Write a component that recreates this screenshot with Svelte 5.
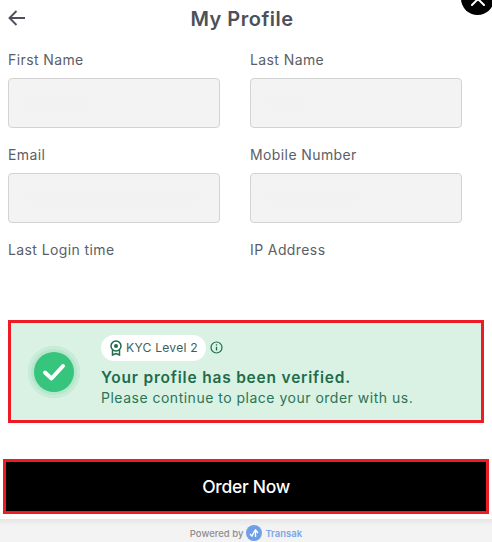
<script>
  const fields = [
    { label: "First Name", smudge: 85 },
    { label: "Last Name", smudge: 55 },
    { label: "Email", smudge: 195 },
    { label: "Mobile Number", smudge: 110 }
  ];
</script>

<div class="page">
  <button class="close" aria-label="Close">
    <svg width="14" height="14" viewBox="0 0 14 14"><path d="M1 1l12 12M13 1L1 13" stroke="#fff" stroke-width="2" stroke-linecap="round" /></svg>
  </button>

  <header>
    <svg class="back" width="18" height="16" viewBox="0 0 18 16" fill="none"><path d="M17 8H1.500M8.500 1L1.500 8l7 7" stroke="#4d5058" stroke-width="1.900" /></svg>
    <h1>My Profile</h1>
  </header>

  <div class="fields">
    {#each fields as field}
      <div class="field">
        <span class="label">{field.label}</span>
        <div class="input"><span class="smudge" style="width: {field.smudge}px"></span></div>
      </div>
    {/each}
    <div class="field"><span class="label">Last Login time</span></div>
    <div class="field"><span class="label">IP Address</span></div>
  </div>

  <section class="kyc">
    <div class="halo">
      <div class="tick">
        <svg width="26" height="22" viewBox="0 0 26 22" fill="none"><path d="M4 11.500l6.500 6L22 5" stroke="#fff" stroke-width="4" stroke-linecap="round" stroke-linejoin="round" /></svg>
      </div>
    </div>
    <div class="kyc-text">
      <div class="badge-row">
        <span class="badge">
          <svg width="14" height="16" viewBox="0 0 14 16" fill="none" stroke="#1f6b4a"><circle cx="7" cy="6" r="5" stroke-width="1.500" /><circle cx="7" cy="6" r="2" fill="#1f6b4a" stroke="none" /><path d="M3.500 10v5l3.500-1.500L10.500 15v-5" stroke-width="1.500" /></svg>
          KYC Level 2
        </span>
        <svg width="13" height="13" viewBox="0 0 13 13" fill="none" stroke="#1f6b4a"><circle cx="6.500" cy="6.500" r="5.500" stroke-width="1.200" /><path d="M6.500 5.800v3.700M6.500 3.300v1.300" stroke-width="1.300" /></svg>
      </div>
      <p class="verified">Your profile has been verified.</p>
      <p class="continue">Please continue to place your order with us.</p>
    </div>
  </section>

  <button class="order">Order Now</button>

  <footer>
    <span>Powered by</span>
    <span class="logo">
      <svg width="10" height="9" viewBox="0 0 10 9" fill="none" stroke="#fff" stroke-width="1.400"><path d="M1 5l2 2 2-4M5 3l1.500-2L9 4M6.500 2v6" /></svg>
    </span>
    <span class="brand">Transak</span>
  </footer>
</div>

<style>
  :global(body) {
    margin: 0;
    background: #fff;
  }
  .page {
    position: relative;
    width: 492px;
    height: 542px;
    overflow: hidden;
    font-family: Inter, "Liberation Sans", sans-serif;
    color: #51545c;
  }
  .close {
    position: absolute;
    top: -18px;
    right: -2px;
    width: 33px;
    height: 33px;
    padding: 0;
    border: 0;
    border-radius: 50%;
    background: #000;
    display: flex;
    align-items: flex-end;
    justify-content: center;
  }
  .close svg {
    margin-bottom: 9px;
  }
  header {
    height: 37px;
    display: flex;
    align-items: center;
    justify-content: center;
    padding-right: 8px;
    position: relative;
  }
  .back {
    position: absolute;
    left: 8px;
    top: 10px;
  }
  h1 {
    margin: 0;
    font-size: 20px;
    font-weight: 600;
    letter-spacing: 0.5px;
    color: #4d5058;
  }
  .fields {
    display: grid;
    grid-template-columns: 212px 212px;
    column-gap: 30px;
    row-gap: 17px;
    padding: 13px 8px 0;
  }
  .field {
    display: flex;
    flex-direction: column;
    gap: 9px;
  }
  .label {
    font-size: 14px;
    line-height: 19px;
    letter-spacing: 0.4px;
    color: #5b5e66;
  }
  .input {
    box-sizing: border-box;
    height: 50px;
    border: 1px solid #d3d3d3;
    border-radius: 4px;
    background: #f3f3f3;
    display: flex;
    align-items: center;
    padding-left: 6px;
  }
  .smudge {
    height: 18px;
    border-radius: 8px;
    background: #f2f2f2;
    filter: blur(3px);
  }
  .kyc {
    box-sizing: border-box;
    width: 476px;
    height: 103px;
    margin: 61px 0 0 8px;
    border: 3px solid #ed1c24;
    background: #d9f2e4;
    display: flex;
    align-items: center;
    gap: 21px;
    padding-left: 17px;
  }
  .halo {
    width: 52px;
    height: 52px;
    flex: none;
    border-radius: 50%;
    background: #b6e6cb;
    box-shadow: inset 0 0 0 3px #c9ecd9;
    display: flex;
    align-items: center;
    justify-content: center;
  }
  .tick {
    width: 40px;
    height: 40px;
    border-radius: 50%;
    background: #37c47c;
    display: flex;
    align-items: center;
    justify-content: center;
  }
  .kyc-text {
    display: flex;
    flex-direction: column;
    margin-top: -1px;
    color: #1f6b4a;
  }
  .badge-row {
    display: flex;
    align-items: center;
    gap: 4px;
    margin-bottom: 6px;
  }
  .badge {
    height: 26px;
    box-sizing: border-box;
    padding: 0 8px;
    border-radius: 13px;
    background: #fff;
    display: flex;
    align-items: center;
    gap: 3px;
    font-size: 12.200px;
    letter-spacing: 0.2px;
    color: #3f5f55;
  }
  p {
    margin: 0;
  }
  .verified {
    font-size: 15.500px;
    line-height: 21px;
    font-weight: 600;
    letter-spacing: 0.8px;
  }
  .continue {
    font-size: 14px;
    line-height: 20px;
    letter-spacing: 0.5px;
    color: #2c7457;
  }
  .order {
    display: block;
    box-sizing: border-box;
    width: 486px;
    height: 55px;
    margin: 36px 0 0 3px;
    border: 3px solid #ed1c24;
    background: #000;
    color: #fff;
    font-family: inherit;
    font-size: 17.500px;
    font-weight: 500;
    letter-spacing: -0.3px;
  }
  footer {
    box-sizing: border-box;
    height: 23px;
    margin-top: 5px;
    background: linear-gradient(#e6e6e6, #f3f3f3 7px);
    display: flex;
    align-items: center;
    justify-content: center;
    gap: 3px;
    padding-top: 5px;
    font-size: 9.500px;
    font-weight: 500;
    color: #8e8e8e;
  }
  .logo {
    width: 16px;
    height: 16px;
    border-radius: 50%;
    background: #6f9fe8;
    display: flex;
    align-items: center;
    justify-content: center;
  }
  .brand {
    font-weight: 600;
    color: #7da6e6;
  }
</style>
